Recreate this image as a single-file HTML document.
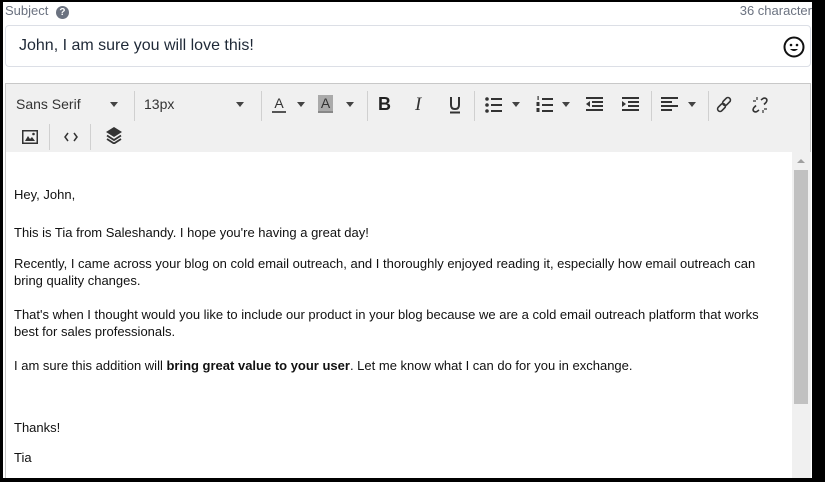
<!DOCTYPE html>
<html><head><meta charset="utf-8"><style>
*{margin:0;padding:0;box-sizing:border-box}
body{width:825px;height:482px;background:#000;position:relative;overflow:hidden;font-family:"Liberation Sans",Arial,sans-serif}
.page{position:absolute;left:3px;top:2px;width:809px;height:476px;background:#fff;overflow:hidden}
.abs{position:absolute}
.lbl{left:2px;top:1px;font-size:13px;color:#6b7280}
.cnt{right:0;top:1px;font-size:13px;color:#6b7280}
.subj{left:2px;top:23px;width:806px;height:42px;border:1px solid #dcdfe6;border-radius:4px}
.subj span{position:absolute;left:13px;top:11px;font-size:16px;color:#1f2937}
.tb{left:2px;top:81px;width:806px;height:70px;background:#f0f0f0;border:1px solid #c8c8c8}
.ed{left:2px;top:150px;width:806px;height:330px;border:1px solid #c8c8c8;border-top:none;background:#fff}
.t{position:absolute;left:8px;font-size:13px;color:#111;line-height:17px;width:770px}
.sep{position:absolute;width:1px;background:#d0d0d0}
.ic{position:absolute;font-size:14px;color:#333}
.car{position:absolute;width:0;height:0;border-left:4px solid transparent;border-right:4px solid transparent;border-top:5px solid #444}
svg{position:absolute}
</style></head><body>
<div class="page">
<div class="abs lbl">Subject <span style="display:inline-block;width:13px;height:13px;border-radius:50%;background:#6b7280;color:#fff;font-size:10px;font-weight:bold;text-align:center;line-height:13px;margin-left:4px">?</span></div>
<div class="abs cnt">36 character</div>
<div class="abs subj"><span>John, I am sure you will love this!</span>
<svg style="left:777px;top:10px" width="22" height="22" viewBox="0 0 22 22"><circle cx="11" cy="11" r="9.5" fill="none" stroke="#111" stroke-width="2"/><circle cx="8" cy="9" r="1.3" fill="#111"/><circle cx="14" cy="9" r="1.3" fill="#111"/><path d="M7 13 Q11 17 15 13Z" fill="#111"/></svg></div>
<div class="abs tb">
<span class="ic" style="left:10px;top:12px;font-size:14px;color:#333">Sans Serif</span><div class="car" style="left:104px;top:18px"></div>
<div class="sep" style="left:128px;top:7px;height:30px"></div>
<span class="ic" style="left:138px;top:12px">13px</span><div class="car" style="left:230px;top:18px"></div>
<div class="sep" style="left:255px;top:7px;height:30px"></div>
<svg style="left:266px;top:12px" width="14" height="18" viewBox="0 0 14 18"><text x="7" y="12" font-size="14" text-anchor="middle" fill="#333" font-family="Liberation Sans">A</text><rect x="0" y="15" width="14" height="2" fill="#555"/></svg><div class="car" style="left:291px;top:18px"></div>
<svg style="left:312px;top:11px" width="15" height="19" viewBox="0 0 15 19"><rect x="0" y="0" width="15" height="16" fill="#aaa"/><text x="7.5" y="13" font-size="14" text-anchor="middle" fill="#333" font-family="Liberation Sans">A</text><rect x="0" y="16" width="15" height="2" fill="#888"/></svg><div class="car" style="left:340px;top:18px"></div>
<div class="sep" style="left:361px;top:7px;height:30px"></div>
<span class="ic" style="left:372px;top:10px;font-weight:bold;font-size:18px;color:#222">B</span>
<span class="ic" style="left:409px;top:10px;font-style:italic;font-family:'Liberation Serif',serif;font-size:19px">I</span>
<svg style="left:443px;top:12px" width="12" height="18" viewBox="0 0 12 18"><path d="M2 1 V9 Q2 13 6 13 Q10 13 10 9 V1" fill="none" stroke="#333" stroke-width="2"/><rect x="1" y="15.5" width="10" height="2" fill="#333"/></svg>
<div class="sep" style="left:468px;top:7px;height:30px"></div>
<svg style="left:479px;top:13px" width="18" height="16" viewBox="0 0 18 16"><g fill="#333"><circle cx="2" cy="2" r="1.8"/><circle cx="2" cy="8" r="1.8"/><circle cx="2" cy="14" r="1.8"/><rect x="6" y="1" width="11" height="2"/><rect x="6" y="7" width="11" height="2"/><rect x="6" y="13" width="11" height="2"/></g></svg><div class="car" style="left:506px;top:18px"></div>
<svg style="left:530px;top:12px" width="18" height="17" viewBox="0 0 18 17"><g fill="#333"><rect x="1.5" y="0" width="1.2" height="4"/><rect x="0.5" y="6" width="3" height="4"/><rect x="0.5" y="12" width="3" height="4"/><rect x="6" y="2" width="11" height="2"/><rect x="6" y="8" width="11" height="2"/><rect x="6" y="14" width="11" height="2"/></g></svg><div class="car" style="left:556px;top:18px"></div>
<svg style="left:580px;top:13px" width="17" height="15" viewBox="0 0 17 15"><g fill="#333"><rect x="0" y="0" width="17" height="2"/><rect x="6" y="4" width="11" height="2"/><rect x="6" y="8" width="11" height="2"/><rect x="0" y="12" width="17" height="2"/><path d="M4 4 L0 7 L4 10Z"/></g></svg>
<svg style="left:616px;top:13px" width="17" height="15" viewBox="0 0 17 15"><g fill="#333"><rect x="0" y="0" width="17" height="2"/><rect x="6" y="4" width="11" height="2"/><rect x="6" y="8" width="11" height="2"/><rect x="0" y="12" width="17" height="2"/><path d="M0 4 L4 7 L0 10Z"/></g></svg>
<div class="sep" style="left:645px;top:7px;height:30px"></div>
<svg style="left:655px;top:13px" width="17" height="15" viewBox="0 0 17 15"><g fill="#333"><rect x="0" y="0" width="17" height="2"/><rect x="0" y="4" width="11" height="2"/><rect x="0" y="8" width="17" height="2"/><rect x="0" y="12" width="11" height="2"/></g></svg><div class="car" style="left:682px;top:18px"></div>
<div class="sep" style="left:702px;top:7px;height:30px"></div>
<svg style="left:710px;top:12px" width="17" height="17" viewBox="0 0 17 17"><g fill="none" stroke="#333" stroke-width="1.6"><rect x="8" y="1" width="5" height="9" rx="2.5" transform="rotate(45 10.5 5.5)"/><rect x="3" y="7" width="5" height="9" rx="2.5" transform="rotate(45 5.5 11.5)"/></g></svg>
<svg style="left:745px;top:12px" width="18" height="18" viewBox="0 0 18 18"><g fill="none" stroke="#333" stroke-width="1.6"><path d="M10 4 L12 2.5 Q14 1.5 15.5 3 Q16.5 4.5 15 6.5 L13 8.5"/><path d="M8 14 L6 15.5 Q4 16.5 2.5 15 Q1.5 13.5 3 11.5 L5 9.5"/><path d="M6 1v3M2 5h3M12 17v-3M16 13h-3" stroke-width="1.2"/></g></svg>
<svg style="left:16px;top:46px" width="16" height="14" viewBox="0 0 16 14"><rect x="0.75" y="0.75" width="14.5" height="12.5" fill="none" stroke="#333" stroke-width="1.5"/><path d="M3 11 L6 6 L8 9 L10 7 L13 11Z" fill="#333"/><circle cx="11.5" cy="4" r="1.3" fill="#333"/></svg>
<div class="sep" style="left:43px;top:40px;height:26px"></div>
<svg style="left:58px;top:48px" width="14" height="10" viewBox="0 0 14 10"><path d="M4 1 L1 5 L4 9 M10 1 L13 5 L10 9" fill="none" stroke="#333" stroke-width="1.5"/></svg>
<div class="sep" style="left:84px;top:40px;height:26px"></div>
<svg style="left:100px;top:43px" width="16" height="17" viewBox="0 0 16 17"><path d="M8 0 L16 5 L8 10 L0 5Z" fill="#333"/><path d="M1 8.5 L8 13 L15 8.5 M1 12 L8 16.5 L15 12" fill="none" stroke="#333" stroke-width="1.8"/></svg>
</div>
<div class="abs ed">
<div class="t" style="top:34px">Hey, John,</div>
<div class="t" style="top:72px">This is Tia from Saleshandy. I hope you're having a great day!</div>
<div class="t" style="top:103px">Recently, I came across your blog on cold email outreach, and I thoroughly enjoyed reading it, especially how email outreach can bring quality changes.</div>
<div class="t" style="top:154px">That's when I thought would you like to include our product in your blog because we are a cold email outreach platform that works best for sales professionals.</div>
<div class="t" style="top:205px">I am sure this addition will <b>bring great value to your user</b>. Let me know what I can do for you in exchange.</div>
<div class="t" style="top:267px">Thanks!</div>
<div class="t" style="top:297px">Tia</div>
<div style="position:absolute;left:786px;top:0;width:19px;height:330px;background:#f0f0f0"></div>
<div style="position:absolute;left:791px;top:7px;width:0;height:0;border-left:4px solid transparent;border-right:4px solid transparent;border-bottom:4px solid #a0a0a0"></div>
<div style="position:absolute;left:788px;top:18px;width:14px;height:234px;background:#c1c1c1"></div>
</div>
</div>
</body></html>
